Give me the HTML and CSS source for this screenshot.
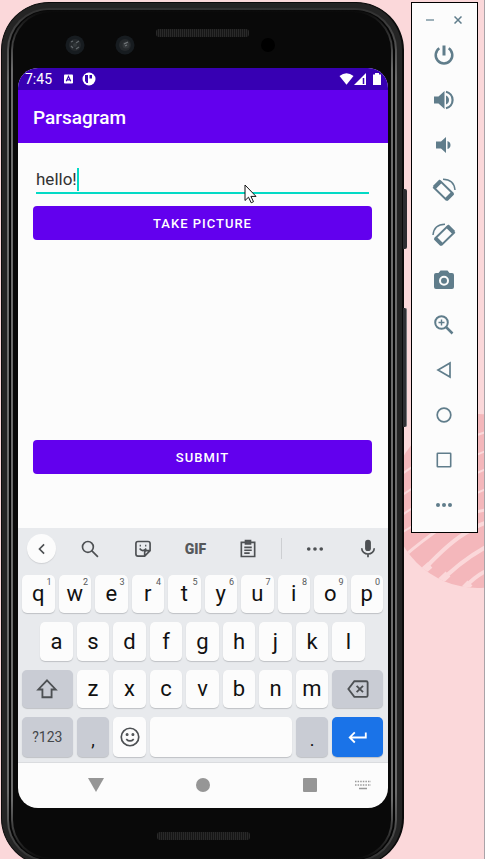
FILE: index.html
```html
<!DOCTYPE html>
<html lang="en">
<head>
<meta charset="utf-8">
<meta name="viewport" content="width=device-width, initial-scale=1">
<title>Parsagram</title>
<link rel="stylesheet" href="styles.css">
</head>
<body>
<svg class="backdrop" width="90" height="180" viewBox="0 0 90 180" aria-hidden="true">
  <defs><clipPath id="disc"><circle cx="84" cy="88" r="87"/></clipPath></defs>
  <g clip-path="url(#disc)">
    <rect width="90" height="180" fill="#f4b7bb"/>
    <g stroke="#fbd8da" stroke-width="2" fill="none">
      <path d="M4 64Q44 34 92 19M4 85Q44 56 92 38M4 105Q44 76 92 56M4 122Q44 96 92 76"/>
      <path d="M8 145Q30 126 50 113T92 97" stroke-width="3"/>
      <path d="M24 163Q52 132 70 121T92 110M42 173Q66 148 92 134M66 180Q78 165 92 158" stroke-width="4"/>
      <path d="M20 166L36 152M38 176L54 161M62 184L76 170" stroke-width="7"/>
    </g>
  </g>
</svg>
<main class="desktop">
  <section class="phone" aria-label="Phone">
    <span class="side-button power"></span>
    <span class="side-button volume"></span>
    <div class="rim"><div class="bezel">
      <div class="forehead">
        <svg class="lens" viewBox="0 0 20 20"><circle cx="10" cy="10" r="9.500" fill="#171c20"/><circle cx="10" cy="10" r="6" fill="#25292c"/><path d="M6 7l2-1M6 11l2 2M11 8l3-2M11 14l3-2" stroke="#62676b" stroke-width="1.300"/><circle cx="10" cy="10" r="2" fill="#34393c"/></svg>
        <svg class="lens" viewBox="0 0 20 20"><circle cx="10" cy="10" r="9.500" fill="#171c20"/><circle cx="10" cy="10" r="6" fill="#25292c"/><circle cx="11" cy="10" r="3.500" fill="#33373a"/><path d="M9 9l4-2M10 11l2-1" stroke="#73777a" stroke-width="1.300"/></svg>
        <span class="grille"></span>
        <span class="sensor"></span>
      </div>
      <div class="screen">
        <div class="status">
          <span>7:45</span>
          <svg class="note" width="9" height="10" viewBox="0 0 10 10"><rect width="10" height="10" rx="1" fill="#fff"/><path d="M2.500 7.500L5 2l2.500 5.500M3.500 6h3" fill="none" stroke="#3700b3" stroke-width="1.300"/></svg>
          <svg width="14" height="14" viewBox="0 0 14 14"><circle cx="7" cy="7" r="6.500" fill="#fff"/><path d="M3 3h3v8H4.500L3 9zM7.500 3H10v3.500H7.500z" fill="#3700b3"/></svg>
          <span class="spacer"></span>
          <svg width="15" height="12" viewBox="0 0 15 12"><path d="M.5 3Q7.500-2.500 14.500 3L7.500 11.800z" fill="#fff"/></svg>
          <svg width="13" height="12" viewBox="0 0 13 12"><path d="M0 12L12 0v12z" fill="#fff"/><path d="M9.500 5v6" stroke="#3700b3" stroke-width="1.500"/></svg>
          <svg class="battery" width="8" height="12" viewBox="0 0 8 12"><path d="M2 0h4v1.500h2V12H0V1.500h2z" fill="#fff"/></svg>
        </div>
        <h1 class="appbar">Parsagram</h1>
        <form class="content">
          <div class="field"><input type="text" value="hello!" aria-label="Description"><span class="caret"></span></div>
          <button class="action" type="button">TAKE PICTURE</button>
          <div class="preview"></div>
          <button class="action" type="button">SUBMIT</button>
        </form>
        <div class="keyboard">
          <div class="tools">
            <button class="round" aria-label="Back"><svg viewBox="0 0 24 24"><path d="M14.500 6.500L9 12l5.500 5.500"/></svg></button>
            <button aria-label="Search"><svg viewBox="0 0 24 24"><circle cx="9.500" cy="9.500" r="6.500"/><path d="M14 14l7.500 7.500"/></svg></button>
            <button aria-label="Stickers"><svg viewBox="0 0 24 24"><path d="M6 3h12a2.500 2.500 0 012.500 2.500V14L14 20.500H6A2.500 2.500 0 013.500 18V5.500A2.500 2.500 0 016 3zM20 14h-4a2 2 0 00-2 2v4"/><path d="M8 11.500q3.500 5 8 0M8 8h1.500M14.500 8H16"/></svg></button>
            <button class="gif">GIF</button>
            <button aria-label="Clipboard"><svg viewBox="0 0 24 24"><path d="M4 4h16v17H4z"/><path d="M9 2h6v4H9z" fill="#55585b"/><path d="M7.500 10h9M7.500 13.500h9M7.500 17H14"/></svg></button>
            <span class="divider"></span>
            <button aria-label="More"><svg viewBox="0 0 24 24"><g fill="#4d5053" stroke="none"><circle cx="4.500" cy="12" r="2.200"/><circle cx="12" cy="12" r="2.200"/><circle cx="19.500" cy="12" r="2.200"/></g></svg></button>
            <button aria-label="Voice"><svg viewBox="0 0 24 24"><rect x="8.500" y="1" width="7" height="13.500" rx="3.500" fill="#4d5053" stroke="none"/><path d="M4.500 11a7.500 7 0 0015 0M12 18v4"/></svg></button>
          </div>
          <div class="keys">
            <button>q<sup>1</sup></button><button>w<sup>2</sup></button><button>e<sup>3</sup></button><button>r<sup>4</sup></button><button>t<sup>5</sup></button><button>y<sup>6</sup></button><button>u<sup>7</sup></button><button>i<sup>8</sup></button><button>o<sup>9</sup></button><button>p<sup>0</sup></button>
            <button class="indent">a</button><button>s</button><button>d</button><button>f</button><button>g</button><button>h</button><button>j</button><button>k</button><button>l</button>
            <button class="wide gray first" aria-label="Shift"><svg viewBox="0 0 24 24"><path d="M12 2.500L21.500 12.500H17V21H7v-8.500H2.500z"/></svg></button><button>z</button><button>x</button><button>c</button><button>v</button><button>b</button><button>n</button><button>m</button><button class="wide gray" aria-label="Delete"><svg class="delete" viewBox="0 0 24 24"><path d="M8 3.500h13a1.500 1.500 0 011.500 1.500v14a1.500 1.500 0 01-1.500 1.500H8L1.500 12zM10.500 8.500l7 7M17.500 8.500l-7 7"/></svg></button>
            <button class="wide gray symbols">?123</button><button class="gray low">,</button><button aria-label="Emoji"><svg viewBox="0 0 24 24"><circle cx="12" cy="12" r="10.500"/><path d="M7.500 14.500q4.500 4.500 9 0"/><circle cx="8.500" cy="9" r=".8"/><circle cx="15.500" cy="9" r=".8"/></svg></button><button class="space" aria-label="Space"></button><button class="gray low">.</button><button class="wide enter" aria-label="Enter"><svg viewBox="0 0 24 24"><path d="M20.500 7v5.500H3.500M8.500 7L3 12.500 8.500 18"/></svg></button>
          </div>
        </div>
        <nav class="navbar" aria-label="System">
          <button aria-label="Hide keyboard"><svg width="16" height="14" viewBox="0 0 16 14"><path d="M0 0h16L8 14z" fill="#969696"/></svg></button>
          <button aria-label="Home"><svg width="14" height="14" viewBox="0 0 14 14"><circle cx="7" cy="7" r="7" fill="#969696"/></svg></button>
          <button aria-label="Recents"><svg width="14" height="14" viewBox="0 0 14 14"><rect width="14" height="14" rx="1" fill="#969696"/></svg></button>
          <button class="switch" aria-label="Switch keyboard"><svg width="16" height="10" viewBox="0 0 16 10"><path d="M0 1.500h16M0 5h16" stroke="#999" stroke-width="1.500" stroke-dasharray="1.500 1.100"/><path d="M4 8.500h8" stroke="#999" stroke-width="1.300"/></svg></button>
        </nav>
      </div>
      <div class="chin"><span class="grille"></span></div>
    </div></div>
  </section>
  <aside class="panel" aria-label="Emulator controls">
    <div class="window">
      <button aria-label="Minimize"><svg width="8" height="8" viewBox="0 0 8 8"><path d="M0 4h8" stroke="#9db0b9" stroke-width="2"/></svg></button>
      <button aria-label="Close"><svg width="8" height="8" viewBox="0 0 8 8"><path d="M.5.5l7 7M7.500.5l-7 7" stroke="#607d8b" stroke-width="1.500"/></svg></button>
    </div>
    <button aria-label="Power"><svg viewBox="0 0 24 24"><path d="M12 2.500v10" stroke-width="3"/><path d="M7.300 5.300a8.300 8.300 0 109.400 0" stroke-width="2.500"/></svg></button>
    <button aria-label="Volume up"><svg viewBox="0 0 24 24"><path class="solid" d="M2 8.500h4.500L12.500 3v18l-6-5.500H2zM14 7.500q3 1.500 3 4.500t-3 4.500z"/><path d="M14 3.800a8.400 8.400 0 010 16.400" stroke-width="2.200"/></svg></button>
    <button aria-label="Volume down"><svg viewBox="0 0 24 24"><path class="solid" d="M4 8.500h5L14 4v16l-5-4.500H4zM15.500 8q3 1 3 4t-3 4z"/></svg></button>
    <button aria-label="Rotate left"><svg viewBox="0 0 24 24"><path d="M2 9.800L8.500 3.300l12.200 11.900-6.500 6.500z" stroke-width="2"/><path d="M2.300 9.500L8.800 3M14.200 21.700l6.500-6.500" stroke-width="4"/><path d="M11 1.300Q22 1.500 23 12" stroke-width="1.500"/></svg></button>
    <button aria-label="Rotate right"><svg viewBox="0 0 24 24"><path d="M22 9.800L15.500 3.300 3.300 15.200l6.500 6.500z" stroke-width="2"/><path d="M21.700 9.500L15.200 3M9.800 21.700l-6.500-6.500" stroke-width="4"/><path d="M13 1.300Q2 1.500 1 12" stroke-width="1.500"/></svg></button>
    <button aria-label="Screenshot"><svg viewBox="0 0 24 24"><path class="solid" fill-rule="evenodd" d="M8.500 2.500h7l2 2.500H20a2 2 0 012 2v12a2 2 0 01-2 2H4a2 2 0 01-2-2V7a2 2 0 012-2h2.500zM12 7.800a5 5 0 100 10 5 5 0 000-10z"/><circle class="solid" cx="12" cy="12.800" r="3"/></svg></button>
    <button aria-label="Zoom"><svg viewBox="0 0 24 24"><circle cx="9.500" cy="9.500" r="6.300"/><path d="M14 14l6.500 6.500" stroke-width="2.500"/><path d="M9.500 6.500v6M6.500 9.500h6" stroke-width="1.400"/></svg></button>
    <button aria-label="Back"><svg viewBox="0 0 24 24"><path d="M18 5v14L6 12z" stroke-width="1.700"/></svg></button>
    <button aria-label="Home"><svg viewBox="0 0 24 24"><circle cx="12" cy="12" r="6.800" stroke-width="1.700"/></svg></button>
    <button aria-label="Overview"><svg viewBox="0 0 24 24"><rect x="5.300" y="5.300" width="13.400" height="13.400" rx=".5" stroke-width="1.600"/></svg></button>
    <button aria-label="More"><svg viewBox="0 0 24 24"><circle class="solid" cx="6" cy="12" r="2"/><circle class="solid" cx="12" cy="12" r="2"/><circle class="solid" cx="18" cy="12" r="2"/></svg></button>
  </aside>
</main>
<svg class="pointer" width="14" height="20" viewBox="0 0 14 20" aria-hidden="true"><path d="M1 1v15.500l3.500-3.300 2.700 5.600 2.300-1.100-2.600-5.300H12z" fill="#fff" stroke="#111" stroke-width="1"/></svg>
</body>
</html>
```
FILE: styles.css
```css
* { box-sizing: border-box; }
html { height: 100%; overflow: hidden; }
body {
  margin: 0;
  min-height: 100%;
  position: relative;
  overflow: hidden;
  background: #fbd8da;
  border-right: 1px solid #a9a3a8;
  font-family: Roboto, "Liberation Sans", sans-serif;
}
button { border: 0; padding: 0; margin: 0; background: none; font: inherit; color: inherit; }
svg { display: block; flex: none; }
.backdrop { position: absolute; right: 0; top: 413px; }
.pointer { position: absolute; left: 244px; top: 184px; }
.desktop { position: relative; display: flex; align-items: flex-start; padding: 2px 6px 0 1px; gap: 7px; }

/* phone body */
.phone {
  position: relative;
  flex: 1;
  min-width: 0;
  border-radius: 48px;
  background: #242424;
  border: 1px solid #0b0b0b;
  border-width: 1px 2px 1px 1px;
  padding: 5px 5px 3px 5px;
}
.side-button { position: absolute; right: -5px; width: 4px; border-radius: 0 2px 2px 0; }
.power { top: 186px; height: 60px; background: #2d2d31; }
.volume { top: 305px; height: 119px; background: #303034; border-right: 1px solid #77777a; }
.rim {
  border: 2px solid transparent;
  border-radius: 42px;
  background:
    linear-gradient(#050505, #050505) padding-box,
    linear-gradient(#303030, #6c6c6c 70px, #6c6c6c calc(100% - 70px), #303030) border-box;
  padding: 0 2px;
}
.bezel {
  border: 2px solid transparent;
  border-radius: 40px;
  background:
    linear-gradient(#090909, #090909) padding-box,
    linear-gradient(#090909, #6c6c6c 60px, #6c6c6c calc(100% - 60px), #090909) border-box;
  padding: 0 3px 0 5px;
}
.forehead { position: relative; height: 56px; display: flex; align-items: center; padding: 0 0 8px 47px; gap: 30px; }
.lens { width: 20px; height: 20px; margin-top: 18px; }
.forehead .grille { margin-top: -6px; margin-left: -9px; }
.grille {
  width: 93px;
  height: 8px;
  border-radius: 3px;
  background: repeating-linear-gradient(90deg, #292929 0 1px, #161616 1px 2px);
}
.sensor { width: 14px; height: 14px; margin: 18px 0 0 -18px; border-radius: 50%; background: #000; }
.chin { height: 50px; display: flex; justify-content: center; padding-top: 24px; }

/* app screen */
.screen { border-radius: 20px; overflow: hidden; background: #fcfcfc; }
.status { height: 22px; display: flex; align-items: center; padding: 0 7px; background: #3700b3; color: #fff; font-size: 14px; }
.note { margin: 0 9px 0 12px; }
.spacer { flex: 1; }
.battery { margin-left: 6px; }
.appbar { margin: 0; height: 53px; padding: 0 15px; background: #6200ee; color: #fff; font-size: 19px; font-weight: 500; line-height: 55px; }
.content { display: flex; flex-direction: column; padding: 23px 16px 54px 15px; }
.field { display: flex; align-items: center; margin: 0 3px; height: 28px; border-bottom: 2px solid #03dac5; }
.field input { field-sizing: content; border: 0; padding: 0; outline: 0; background: none; color: #333; font: 17px/24px Roboto, "Liberation Sans", sans-serif; }
.caret { width: 2px; height: 23px; background: #03dac5; }
.action { height: 34px; margin-top: 12px; border-radius: 4px; background: #6200ee; color: #fff; font-size: 13px; font-weight: 500; letter-spacing: 1px; }
.preview { height: 188px; }

/* keyboard */
.keyboard { background: #e8eaed; padding: 0 5px 5px 4px; border-bottom: 1px solid #dadcdf; color: #111; }
.keyboard svg { fill: none; stroke: #4d5053; stroke-width: 2; width: 20px; height: 20px; }
.tools { height: 47px; display: flex; align-items: center; justify-content: space-between; padding: 0 2px 6px 5px; }
.tools button { width: 26px; display: flex; justify-content: center; color: #55585b; }
.tools .round { width: 29px; height: 29px; margin-right: -6px; align-items: center; border-radius: 50%; background: #fcfcfc; box-shadow: 0 1px 1px #cfd1d4; }
.tools .gif { font-size: 14px; font-weight: 900; }
.divider { width: 1px; height: 21px; margin: 0 -7px; background: #cdcfd2; }
.keys { display: grid; grid-template-columns: repeat(20, 1fr); grid-template-rows: 38px 39px 38px 40px; gap: 9px 4px; }
.keys button {
  position: relative;
  grid-column: span 2;
  display: flex;
  align-items: center;
  justify-content: center;
  border-radius: 5px;
  background: #fcfcfc;
  box-shadow: 0 1px 1px #bfc1c5;
  font-size: 22px;
  line-height: 24px;
}
.keys sup { position: absolute; top: 2px; right: 3px; font-size: 9px; line-height: 10px; color: #55585b; }
.keys .indent { grid-column: 2 / span 2; }
.keys .wide { grid-column: span 3; }
.keys .first { grid-column: 1 / span 3; }
.keys .space { grid-column: span 8; }
.keys .gray { background: #c9ccd4; }
.keys .symbols { font-size: 14px; color: #44474a; }
.keys .low { font-size: 18px; padding-top: 6px; }
.keys .enter { background: #1a73e8; }
.keys .wide svg { width: 22px; height: 22px; }
.keys .wide .delete { width: 24px; }
.keys .enter svg { stroke: #fff; }
.navbar { height: 45px; display: flex; padding: 0 10px 1px 25px; }
.navbar button { flex: 1; display: flex; align-items: center; justify-content: center; }
.navbar .switch { flex: none; width: 30px; margin-left: -15px; }

/* emulator controls */
.panel { width: 67px; flex: none; display: flex; flex-direction: column; border: 1px solid #000; background: #fcfcfc; padding: 0 1px 5px 0; }
.window { height: 29px; display: flex; align-items: center; justify-content: center; gap: 20px; padding-top: 5px; }
.panel > button { height: 45px; display: flex; align-items: center; justify-content: center; }
.panel > button svg { width: 24px; height: 24px; fill: none; stroke: #607d8b; stroke-width: 2; }
.panel .solid { fill: #607d8b; stroke: none; }
```
